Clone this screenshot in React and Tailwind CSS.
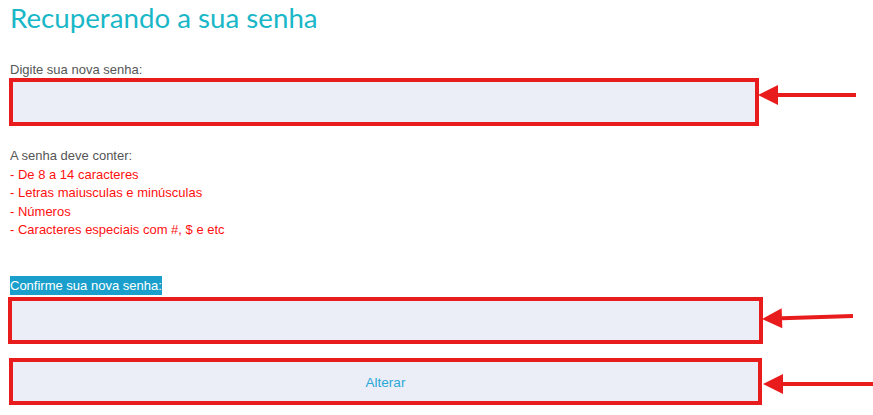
import React from 'react'

// red hand-drawn style arrows pointing left at each field
function Arrow({ x1, y1, x2, y2, head = 20, half = 10 }) {
  const dx = x1 - x2
  const dy = y1 - y2
  const len = Math.hypot(dx, dy)
  const ux = dx / len
  const uy = dy / len
  const bx = x2 + ux * head
  const by = y2 + uy * head
  return (
    <g>
      <line x1={x1} y1={y1} x2={bx} y2={by} stroke="#e81c1c" strokeWidth="4" />
      <polygon
        points={`${x2},${y2} ${bx - uy * half},${by + ux * half} ${bx + uy * half},${by - ux * half}`}
        fill="#e81c1c"
      />
    </g>
  )
}

export default function App() {
  const rules = [
    '- De 8 a 14 caracteres',
    '- Letras maiusculas e minúsculas',
    '- Números',
    '- Caracteres especiais com #, $ e etc',
  ]

  return (
    <div className="relative w-[873px] h-[415px] bg-white overflow-hidden font-['Liberation_Sans',Arial,sans-serif]">
      <div className="flex flex-col pl-[9px]">
        <h1 className="pl-px pt-[1px] h-[36px] text-[27.7px] leading-[34px] text-[#19b7c7] font-['Lato',sans-serif] font-normal">
          Recuperando a sua senha
        </h1>

        <label className="mt-[26px] pl-px text-[13px] leading-[16px] text-[#555]">Digite sua nova senha:</label>
        <div className="w-[750px] h-[48px] border-4 border-[#e81c1c] bg-[#eceef7]" />

        <div className="mt-[21px] pl-px text-[13px] leading-[18.5px]">
          <p className="text-[#555]">A senha deve conter:</p>
          {rules.map((r) => (
            <p key={r} className="text-[#ff1010]">{r}</p>
          ))}
        </div>

        <div className="mt-[33px] pl-px">
          <span className="inline-block bg-[#1a9fcc] text-white text-[13px] leading-[18px] pt-[1px]">
            Confirme sua nova senha:
          </span>
        </div>
        <div className="-ml-px w-[755px] h-[47px] border-4 border-[#e81c1c] bg-[#eceef7]" />

        <button className="mt-[14px] w-[753px] h-[47px] border-4 border-[#e81c1c] bg-[#eceef7] text-[13.5px] text-[#2aa8d6] flex items-center justify-center pt-[5px]">
          Alterar
        </button>
      </div>

      <svg className="absolute inset-0 pointer-events-none" width="873" height="415">
        <Arrow x1={856} y1={95} x2={758} y2={95} />
        <Arrow x1={853} y1={316} x2={762} y2={319} />
        <Arrow x1={873} y1={384} x2={763} y2={384} />
      </svg>
    </div>
  )
}
